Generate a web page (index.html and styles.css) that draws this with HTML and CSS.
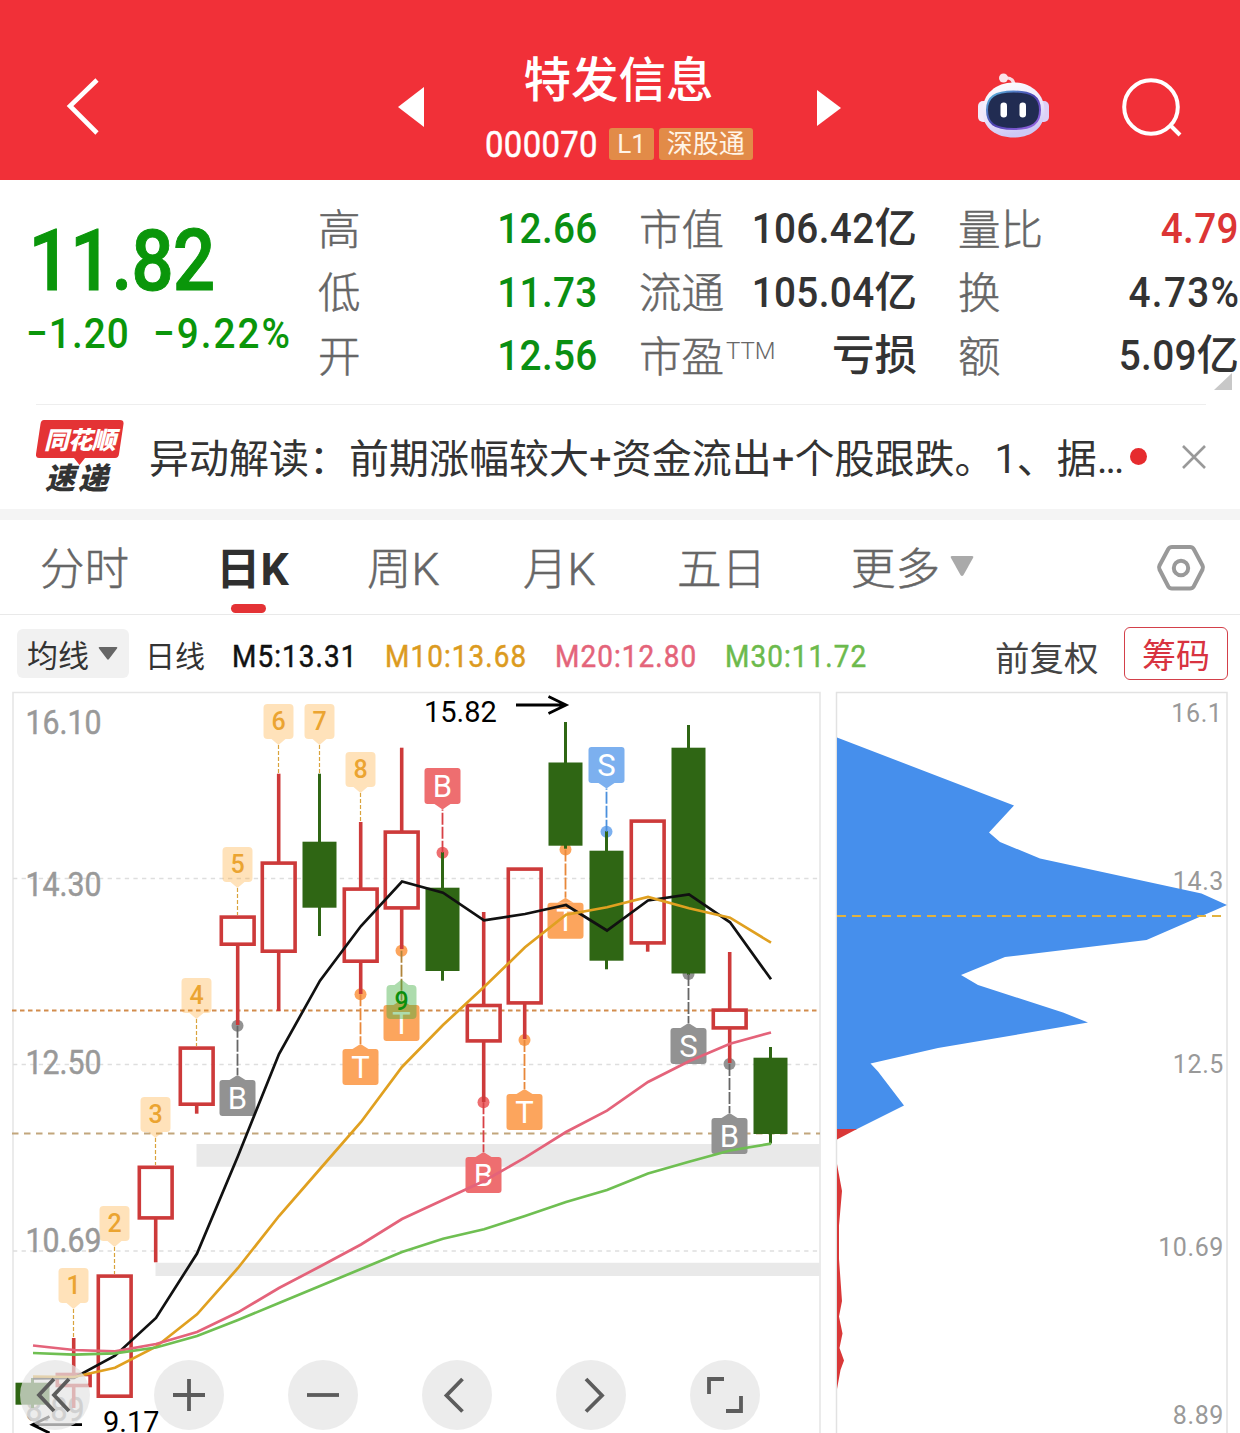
FILE: index.html
```html
<!DOCTYPE html>
<html lang="zh-CN">
<head>
<meta charset="utf-8">
<title>特发信息 000070</title>
<link rel="stylesheet" href="styles.css">
</head>
<body>
<header class="topbar">
  <svg class="back" width="36" height="60" viewBox="0 0 36 60"><path d="M32 4 5 30 32 57" fill="none" stroke="#fff" stroke-width="4.6"/></svg>
  <svg class="prev" width="26" height="40" viewBox="0 0 26 40"><path d="M0 20 26 0V40Z" fill="#fff"/></svg>
  <div class="stock">
    <h1 class="stock-name">特发信息</h1>
    <div class="stock-meta"><span class="code">000070</span><span class="badge">L1</span><span class="badge">深股通</span></div>
  </div>
  <svg class="next" width="24" height="36" viewBox="0 0 24 36"><path d="M0 0 24 18 0 36Z" fill="#fff"/></svg>
  <svg class="robot" width="72" height="68" viewBox="0 0 72 68">
    <defs>
      <linearGradient id="shell" x1="0" y1="0" x2="0.3" y2="1"><stop offset="0" stop-color="#fff"/><stop offset=".6" stop-color="#ece6fb"/><stop offset="1" stop-color="#cdc8f5"/></linearGradient>
      <linearGradient id="rim" x1="0" y1="0" x2="1" y2="1"><stop offset="0" stop-color="#5cc0e0"/><stop offset=".5" stop-color="#4a3fae"/><stop offset="1" stop-color="#a06be8"/></linearGradient>
    </defs>
    <path d="M26 6C34 5 36 9 36 15" fill="none" stroke="#f8dce4" stroke-width="3.4"/>
    <circle cx="25.500" cy="6" r="4.500" fill="#fbe3ea"/>
    <rect x="0" y="29" width="12" height="21" rx="5" fill="#f2eafa"/>
    <rect x="59" y="29" width="12" height="21" rx="5" fill="#ddd0f6"/>
    <path d="M35.500 10.500C53 10.500 66.500 22 66.500 39 66.500 57 52 65.500 35.500 65.500S4.500 57 4.500 39C4.500 22 18 10.500 35.500 10.500Z" fill="url(#shell)"/>
    <path d="M35.500 19.500C54 19.500 62 25 62 38S55 57 35.500 57 9 51 9 38 17 19.500 35.500 19.500Z" fill="#212c52" stroke="url(#rim)" stroke-width="2"/>
    <rect x="22.500" y="30.500" width="6.500" height="15" rx="3.200" fill="#fff"/>
    <rect x="41.500" y="30.500" width="6.500" height="15" rx="3.200" fill="#fff"/>
  </svg>
  <svg class="search" width="64" height="64" viewBox="0 0 64 64"><g fill="none" stroke="#fff" stroke-width="4"><circle cx="31" cy="30" r="26.800"/><path d="M49.500 47.500 60 58"/></g></svg>
</header>

<section class="quote">
  <div class="price-box">
    <div class="price">11.82</div>
    <div class="change"><span class="diff">−1.20</span><span class="rate">−9.22%</span></div>
  </div>
  <dl class="stats stats-a">
    <dt>高</dt><dd class="down"><span class="n">12.66</span></dd>
    <dt>低</dt><dd class="down"><span class="n">11.73</span></dd>
    <dt>开</dt><dd class="down"><span class="n">12.56</span></dd>
  </dl>
  <dl class="stats stats-b">
    <dt>市值</dt><dd><span class="n">106.42</span><b>亿</b></dd>
    <dt>流通</dt><dd><span class="n">105.04</span><b>亿</b></dd>
    <dt>市盈<sup>TTM</sup></dt><dd><b>亏损</b></dd>
  </dl>
  <dl class="stats stats-c">
    <dt>量比</dt><dd class="up"><span class="n">4.79</span></dd>
    <dt>换</dt><dd><span class="n percent">4.73%</span></dd>
    <dt>额</dt><dd><span class="n">5.09</span><b>亿</b></dd>
  </dl>
  <i class="corner"></i>
</section>

<section class="news">
  <div class="news-logo">
    <svg class="logo-bg" width="88" height="46" viewBox="0 0 88 46"><path d="M8 0H84Q88 0 87.500 4L83 34Q82.500 38 79 38H49L43.500 45 38 38H3Q-.5 38 0 34L4.500 4Q5 0 8 0Z" fill="#e43335"/></svg>
    <span class="logo-top">同花顺</span>
    <span class="logo-bottom">速递</span>
  </div>
  <p class="news-text">异动解读：前期涨幅较大+资金流出+个股跟跌。1、据<span class="more">...</span></p>
  <i class="dot"></i>
  <svg class="close" width="24" height="24" viewBox="0 0 24 24"><path d="M1 1 23 23M23 1 1 23" stroke="#999" stroke-width="2.600"/></svg>
</section>

<nav class="tabs">
  <span class="tab">分时</span>
  <span class="tab active">日K</span>
  <span class="tab">周K</span>
  <span class="tab">月K</span>
  <span class="tab">五日</span>
  <span class="tab">更多<svg class="caret" width="24" height="22" viewBox="0 0 24 22"><path d="M2 1H22Q24 1 23 3L13.500 20Q12 22 10.500 20L1 3Q0 1 2 1Z" fill="#aaa"/></svg></span>
  <svg class="gear" width="50" height="48" viewBox="0 0 50 48"><g fill="none" stroke="#999" stroke-width="4"><path d="M16 3H34Q36.500 3 37.700 5L46.500 21.500Q47.500 23.500 46.500 25.500L37.700 42.500Q36.500 44.500 34 44.500H16Q13.500 44.500 12.300 42.500L3.500 25.500Q2.500 23.500 3.500 21.500L12.300 5Q13.500 3 16 3Z"/><circle cx="25" cy="24" r="7.200"/></g></svg>
</nav>

<div class="ma-bar">
  <span class="pill">均线<svg width="20" height="15" viewBox="0 0 20 15"><path d="M1.500 1H18.500Q20 1 19 2.500L11 13Q10 14.500 9 13L1 2.500Q0 1 1.500 1Z" fill="#666"/></svg></span>
  <span class="period">日线</span>
  <span class="ma m5">M5:13.31</span>
  <span class="ma m10">M10:13.68</span>
  <span class="ma m20">M20:12.80</span>
  <span class="ma m30">M30:11.72</span>
  <span class="adjust">前复权</span>
  <span class="chips">筹码</span>
</div>

<main class="charts">
  <svg class="kline" id="kline" width="822" height="743" viewBox="0 690 822 743"></svg>
  <svg class="profile" width="418" height="743" viewBox="822 690 418 743">
    <path d="M836.500 1433V692.500H1227V1433" fill="none" stroke="#e2e2e2" stroke-width="1.500"/>
    <g class="profile-axis">
      <text x="1222.500" y="721.500">16.1</text><text x="1224" y="889.500">14.3</text><text x="1224" y="1073">12.5</text><text x="1224" y="1255.500">10.69</text><text x="1224" y="1423.500">8.89</text>
    </g>
    <path fill="#468fec" d="M837 737.500 1014 805.500 989 832.500 1000 842 1040 858.500 1201.500 893.500 1227 905 1146.500 940 1005 957 961 975 978 985 1063 1012.500 1088 1022.500 938 1048 870.500 1063.500 878 1071.500 904 1105.500 855 1130H837Z"/>
    <path fill="#d93838" d="M837 1129H857L837 1139.500V1164L842 1191 839 1225.500V1259L842 1301 839 1316.500 842.500 1333.500 839.500 1348 844 1360.500 840.500 1370 837 1389Z"/>
    <path d="M837 916H1223" stroke="#e2b23f" stroke-width="2" stroke-dasharray="9 6"/>
  </svg>
  <div class="tools">
    <button class="tool"><svg viewBox="0 0 70 70"><path d="M34 19 19 35 34 51M49 19 34 35 49 51"/></svg></button>
    <button class="tool"><svg viewBox="0 0 70 70"><path d="M19 35H51M35 19V51"/></svg></button>
    <button class="tool"><svg viewBox="0 0 70 70"><path d="M19 35H51"/></svg></button>
    <button class="tool"><svg viewBox="0 0 70 70"><path d="M40.500 19 24.500 35.500 40.500 51.500"/></svg></button>
    <button class="tool"><svg viewBox="0 0 70 70"><path d="M30 19 46 35.500 30 51.500"/></svg></button>
    <button class="tool"><svg viewBox="0 0 70 70"><path d="M19 34V19H34M36 51H51V36"/></svg></button>
  </div>
</main>
<script src="chart.js"></script>
</body>
</html>
```
FILE: styles.css
```css
* { box-sizing: border-box; }
body {
  margin: 0;
  width: 1240px;
  height: 1433px;
  overflow: hidden;
  background: #fff;
  color: #333;
  font-family: Roboto, "Noto Sans CJK SC", sans-serif;
}
svg { display: block; flex: none; }

.topbar {
  display: flex;
  align-items: flex-start;
  height: 180px;
  background: #f13038;
  color: #fff;
}
.back { margin: 76px 0 0 65px; }
.prev { margin: 87px 0 0 297px; }
.stock { width: 393px; display: flex; flex-direction: column; align-items: center; padding-top: 48px; }
.stock-name { margin: 0 4px 0 0; font-size: 47.500px; line-height: 66px; font-weight: 500; }
.stock-meta { display: flex; gap: 5px; align-items: center; height: 32px; margin: 14px 3px 0 0; }
.code { width: 119px; font-size: 36.500px; letter-spacing: .400px; transform: scaleX(.9); transform-origin: left; -webkit-text-stroke: .5px #fff; }
.badge { height: 32px; line-height: 33px; padding: 0 8px; border-radius: 3px; background: #e28b48; font-size: 26px; color: #fff4e6; }
.next { margin: 90px 0 0 0; }
.robot { margin: 72px 0 0 137px; }
.search { margin: 77px 0 0 70px; }

.quote {
  position: relative;
  display: flex;
  height: 224px;
}
.price-box { width: 318px; padding: 31px 0 0 26px; color: #0a960a; }
.price { height: 100px; line-height: 100px; padding-left: 3px; font-size: 86px; font-weight: 500; letter-spacing: -1.200px; transform: scaleX(.87); transform-origin: left; -webkit-text-stroke: 1px; }
.change { display: flex; line-height: 50px; margin-top: -3px; font-size: 43px; font-weight: 500; white-space: nowrap; }
.diff { width: 127px; letter-spacing: 1.200px; transform: scaleX(.9); transform-origin: left; }
.rate { letter-spacing: 2.200px; transform: scaleX(.9); transform-origin: left; }
.stats {
  display: grid;
  grid-template-columns: 86px 1fr;
  grid-auto-rows: 63.500px;
  flex: none;
  margin: 0;
  padding-top: 17px;
  line-height: 63.500px;
}
.stats-a { width: 280px; }
.stats-b { width: 278px; margin-left: 41px; }
.stats-c { width: 281px; margin-left: 41px; }
.stats dt { position: relative; top: 1.500px; font-size: 42.500px; font-weight: 300; color: #666; white-space: nowrap; -webkit-text-stroke: .5px; }
.stats dd { margin: 0; font-size: 43px; font-weight: 500; text-align: right; white-space: nowrap; }
.n { display: inline-block; letter-spacing: .400px; transform: scaleX(.9); transform-origin: right; }
.percent { letter-spacing: 1.500px; margin-right: -1px; }
.stats b { font-size: 42.500px; font-weight: 500; }
.stats sup { margin-left: 2px; font-size: 24px; line-height: 0; vertical-align: 13px; -webkit-text-stroke: 0; }
.stats .down { color: #0a8f12; }
.stats .up { color: #dc3535; }
.corner { position: absolute; right: 8px; bottom: 14px; border-left: 18px solid transparent; border-bottom: 17px solid #c8c8c8; }

.news {
  display: flex;
  align-items: center;
  height: 105px;
  margin: 0 34px 0 36px;
  border-top: 1.500px solid #eee;
}
.news-logo { position: relative; flex: none; width: 88px; height: 74px; margin-top: -1px; }
.logo-bg { position: absolute; left: 0; top: 0; }
.logo-top { position: absolute; left: 8px; top: 3px; font: italic 900 24.500px/32px "Noto Sans CJK SC", sans-serif; color: #fff; letter-spacing: -.8px; white-space: nowrap; }
.logo-bottom { position: absolute; left: 9px; top: 40px; font: italic 900 30px/32px "Noto Sans CJK SC", sans-serif; color: #333; letter-spacing: 3px; white-space: nowrap; }
.news-text { flex: none; margin: 5px 0 0 25px; width: 971px; font-size: 40px; line-height: 60px; white-space: nowrap; }
.more { letter-spacing: -2px; }
.dot { width: 17px; height: 17px; margin: -2px 0 0 10px; border-radius: 50%; background: #e62b2e; }
.close { margin: 0 0 0 auto; }

.tabs {
  display: grid;
  grid-template-columns: 176px 151px 156px 154px 174px auto auto;
  height: 106px;
  padding-left: 40px;
  border-top: 11px solid #f4f4f4;
  border-bottom: 1.500px solid #e9e9e9;
}
.tab { display: flex; align-items: center; height: 91px; font-size: 44.500px; font-weight: 300; color: #666; white-space: nowrap; -webkit-text-stroke: .5px; }
.tab.active { position: relative; color: #2f2f2f; font-weight: 700; -webkit-text-stroke: 0; }
.tab.active::after { content: ""; position: absolute; left: 15px; bottom: -2px; width: 35px; height: 9px; border-radius: 5px; background: #e43235; }
.caret { margin: 0 0 0 10px; }
.gear { margin: 24px 34px 0 auto; }

.ma-bar { display: flex; align-items: center; height: 75px; padding: 0 12px 0 17px; white-space: nowrap; }
.pill { display: flex; align-items: center; gap: 9px; width: 112px; height: 49px; margin-top: 1px; padding-left: 10px; border-radius: 6px; background: #f1f1f1; font-size: 31px; }
.period { width: 87px; margin: 3px 0 0 16px; font-size: 30px; }
.ma { font-size: 31px; letter-spacing: 1.200px; transform: scaleX(.9); transform-origin: left; -webkit-text-stroke: .5px; margin-top: 7px; }
.m5 { width: 153px; color: #111; }
.m10 { width: 170px; color: #dc9b1f; }
.m20 { width: 170px; color: #e4647a; }
.m30 { width: 270px; color: #6cba4c; }
.adjust { width: 129px; margin-top: 7px; font-size: 34.500px; color: #444; }
.chips { width: 104px; height: 53px; line-height: 57px; margin-top: 1px; border: 1.500px solid #d3404a; border-radius: 6px; color: #d83340; font-size: 34px; text-align: center; }

.charts { position: relative; display: flex; height: 743px; }
.kline text { font-family: Roboto, sans-serif; }
.axis { fill: #999; font-size: 34px; }
.peak { fill: #000; font-size: 29px; }
.num { font-size: 25px; font-weight: 500; text-anchor: middle; fill: #eba431; }
.nine { fill: #0c8f0c; }
.letter { font-size: 31px; text-anchor: middle; fill: #fff; }
.profile-axis { fill: #999; font: 25px Roboto, sans-serif; letter-spacing: .6px; text-anchor: end; }
.tools { position: absolute; left: 20px; top: 670px; display: flex; gap: 64px; }
.tool { width: 70px; height: 70px; padding: 0; border: 0; border-radius: 50%; background: rgba(228, 228, 228, .72); }
.tool svg { width: 70px; height: 70px; fill: none; stroke: #5c5c5c; stroke-width: 3.800; }
```
FILE: chart.js
```js
// Geometry of the candlestick chart, in page pixels.
const centre = (i) => 32.5 + 41 * i;

// [index, colour, high, body top, body bottom, low]
const candles = [
  [0, 'g', 1378, 1382.7, 1404.7, 1408], [1, 'r', 1338, 1372.7, 1387.3, 1408], [2, 'r', 1274.3, 1274.3, 1398, 1398],
  [3, 'r', 1165.5, 1165.5, 1219.7, 1262.3], [4, 'r', 1046.3, 1046.3, 1106, 1113.7], [5, 'r', 915.3, 915.3, 946, 1025],
  [6, 'r', 773.7, 861.3, 953, 1011], [7, 'g', 773.7, 841.7, 907.7, 936], [8, 'r', 822, 887.3, 963, 994],
  [9, 'r', 747.7, 830.3, 909.7, 949], [10, 'g', 852, 887.7, 971, 980.7], [11, 'r', 912, 1003.7, 1042.7, 1102],
  [12, 'r', 867.3, 867.3, 1004.7, 1039], [13, 'g', 722, 762.5, 845.7, 848.7], [14, 'g', 831, 850.7, 960.7, 969.3],
  [15, 'r', 819.3, 819.3, 944.7, 951.7], [16, 'g', 725, 747.7, 973.5, 975], [17, 'r', 952, 1008.3, 1029.7, 1063],
  [18, 'g', 1047, 1057.7, 1134, 1143.5]
];

// [index, digit, box top, dash end]
const counts = [[1, 1, 1268, 1338], [2, 2, 1206, 1274], [3, 3, 1097, 1165], [4, 4, 978, 1046], [5, 5, 847, 915],
  [6, 6, 704, 773], [7, 7, 704, 773], [8, 8, 752, 822]];

// [index, letter, box top, dot y, fill, dash colour]
const signals = [
  [5, 'B', 1080, 1025.7, '#929292', '#666'], [8, 'T', 1049, 994.3, '#fca55d', '#e8883a'], [9, 'T', 1005, 950.7, '#fca55d', '#b0843a'],
  [10, 'B', 768, 852.7, '#ee6e70', '#d84045'], [11, 'B', 1157, 1102.3, '#ee6e70', '#d84045'], [12, 'T', 1094, 1040, '#fca55d', '#e8883a'],
  [13, 'T', 902.7, 849.5, '#fca55d', '#e8883a'], [14, 'S', 747, 831.7, '#7cb0ef', '#4a90dd'],
  [16, 'S', 1028, 974, '#929292', '#666'], [17, 'B', 1118, 1064, '#929292', '#666']
];

const averages = [
  ['#111', [1378.5, 1378, 1355.7, 1318, 1253.5, 1156, 1054, 980.7, 926, 881.5, 892.7, 920.3, 914, 905, 930.5, 900.5, 894.5, 922.3, 979.3]],
  ['#e0a020', [1376.5, 1377, 1367.7, 1346.7, 1314.3, 1268, 1216, 1169, 1122, 1067, 1025, 987, 947.3, 914.7, 907.3, 896.9, 908.3, 917.7, 942.7]],
  ['#e4637a', [1345.5, 1350, 1351.3, 1344, 1332, 1312.3, 1288, 1266.5, 1244.5, 1219, 1200, 1181, 1157.7, 1132, 1110.7, 1082, 1061.3, 1043.7, 1032.5]],
  ['#6fbf52', [1353, 1354.7, 1353.3, 1347.5, 1336, 1320, 1303, 1286, 1269, 1252, 1238.7, 1229.3, 1216, 1202, 1190, 1173.5, 1161.7, 1150.5, 1143.7]]
];

const out = [];
const line = (x1, y1, x2, y2, stroke, width, dash = '') =>
  out.push(`<path d="M${x1} ${y1}L${x2} ${y2}" fill="none" stroke="${stroke}" stroke-width="${width}" stroke-dasharray="${dash}"/>`);

out.push('<path d="M13 1433V692.5H820V1433" fill="none" stroke="#e6e6e6" stroke-width="1.6"/>');
[878.5, 1064.5, 1251].forEach((y) => line(13, y, 820, y, '#dedede', 1.3, '4.3 4.3'));
out.push('<path d="M196.500 1144H820V1166.700H196.500ZM155.500 1262.700H820V1276H155.500Z" fill="#e9e9e9"/>');
[['16.10', 733.5, 76], ['14.30', 895.5, 76], ['12.50', 1073.5, 76], ['10.69', 1251.5, 76], ['8.89', 1421, 59]].forEach(([t, y, w]) =>
  out.push(`<text class="axis" x="25.500" y="${y}" textLength="${w}" lengthAdjust="spacingAndGlyphs" stroke="#999" stroke-width=".5">${t}</text>`));
line(12, 1010.5, 820, 1010.5, '#d28c4c', 2, '4.5 3.5');
line(12, 1133.5, 820, 1133.5, '#c2a67c', 2, '6.5 5.5');

signals.forEach(([i, , , dot, fill]) => out.push(`<circle cx="${centre(i)}" cy="${dot}" r="6" fill="${fill}"/>`));

candles.forEach(([i, c, high, top, bottom, low]) => {
  const x = centre(i) + (c === 'r' ? 0.2 : 0);
  if (c === 'g') {
    line(x, high, x, low, '#2f6614', 3);
    out.push(`<rect x="${x - 17}" y="${top}" width="34" height="${bottom - top}" fill="#2f6614"/>`);
    return;
  }
  if (high < top) line(x, high, x, top + 1, '#cd3a3a', 3.6);
  if (low > bottom) line(x, bottom - 1, x, low, '#cd3a3a', 3.6);
  out.push(`<rect x="${x - 16.4}" y="${top + 1.8}" width="32.800" height="${bottom - top - 3.6}" fill="none" stroke="#cd3a3a" stroke-width="3.600"/>`);
});

signals.forEach(([i, t, y, dot, fill, dash]) => {
  const x = centre(i);
  const above = y < dot;
  const tip = above ? y + 41.5 : y - 5;
  const base = above ? y + 36 : y;
  line(x, dot, x, tip, dash, 1.8, '12 2');
  out.push(`<rect x="${x - 18}" y="${y}" width="36" height="36" rx="3" fill="${fill}"/><path d="M${x - 8} ${base}L${x} ${tip}L${x + 8} ${base}Z" fill="${fill}"/>`);
  out.push(`<text class="letter" x="${x}" y="${y + 28.7}">${t}</text>`);
});

counts.forEach(([i, t, y, end]) => {
  const x = centre(i);
  line(x, y + 41, x, end, '#d9a33c', 1.2, '4 2');
  out.push(`<path d="M${x - 11} ${y}h22q4 0 4 4v27q0 4-4 4h-4l-7 6-7-6h-4q-4 0-4-4v-27q0-4 4-4Z" fill="#ff9f1a" fill-opacity=".3"/>`);
  out.push(`<text class="num" x="${x}" y="${y + 25.5}">${t}</text>`);
});

// Completed nine-count under the candle
out.push('<path d="M390.500 985h4l7-5.500 7 5.500h4q4 0 4 4v26q0 4-4 4h-22q-4 0-4-4v-26q0-4 4-4Z" fill="#3cab3c" fill-opacity=".42"/>');
out.push('<text class="num nine" x="401.500" y="1009.500">9</text>');

averages.forEach(([stroke, ys]) =>
  out.push(`<polyline points="${ys.map((y, i) => `${centre(i) + 0.5},${y}`).join(' ')}" fill="none" stroke="${stroke}" stroke-width="2.700"/>`));

out.push('<text class="peak" x="424" y="721.500">15.82</text><text class="peak" x="103" y="1432">9.17</text>');
out.push('<path d="M516 705H565M548.500 696.500 566 705 548.500 713.500M82 1424.700H33M49.500 1416.500 32.500 1424.700 49.500 1433" fill="none" stroke="#000" stroke-width="2.800"/>');

document.getElementById('kline').innerHTML = out.join('');
```
